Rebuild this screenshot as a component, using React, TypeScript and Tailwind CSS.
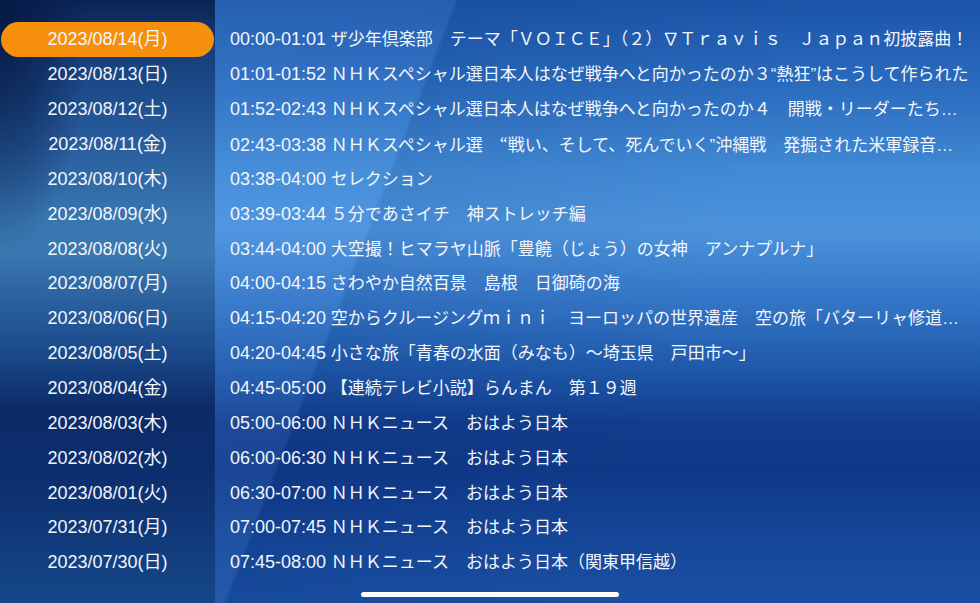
import React from 'react';

interface Program {
  date: string;
  time: string;
  title: React.ReactNode;
}

const programs: Program[] = [
  { date: '2023/08/14(月)', time: '00:00-01:01', title: 'ザ少年倶楽部　テーマ「ＶＯＩＣＥ」（２）∇Ｔｒａｖｉｓ　Ｊａｐａｎ初披露曲！' },
  { date: '2023/08/13(日)', time: '01:01-01:52', title: 'ＮＨＫスペシャル選日本人はなぜ戦争へと向かったのか３“熱狂”はこうして作られた' },
  { date: '2023/08/12(土)', time: '01:52-02:43', title: 'ＮＨＫスペシャル選日本人はなぜ戦争へと向かったのか４　開戦・リーダーたちの迷走' },
  {
    date: '2023/08/11(金)',
    time: '02:43-03:38',
    title: (
      <>
        ＮＨＫスペシャル選　<span className="font-['Noto_Sans_CJK_JP',sans-serif]">“</span>戦い、そして、死んでいく”沖縄戦　発掘された米軍録音テープ
      </>
    ),
  },
  { date: '2023/08/10(木)', time: '03:38-04:00', title: 'セレクション' },
  { date: '2023/08/09(水)', time: '03:39-03:44', title: '５分であさイチ　神ストレッチ編' },
  { date: '2023/08/08(火)', time: '03:44-04:00', title: '大空撮！ヒマラヤ山脈「豊饒（じょう）の女神　アンナプルナ」' },
  { date: '2023/08/07(月)', time: '04:00-04:15', title: 'さわやか自然百景　島根　日御碕の海' },
  { date: '2023/08/06(日)', time: '04:15-04:20', title: '空からクルージングｍｉｎｉ　ヨーロッパの世界遺産　空の旅「バターリャ修道院」' },
  { date: '2023/08/05(土)', time: '04:20-04:45', title: '小さな旅「青春の水面（みなも）～埼玉県　戸田市～」' },
  { date: '2023/08/04(金)', time: '04:45-05:00', title: '【連続テレビ小説】らんまん　第１９週' },
  { date: '2023/08/03(木)', time: '05:00-06:00', title: 'ＮＨＫニュース　おはよう日本' },
  { date: '2023/08/02(水)', time: '06:00-06:30', title: 'ＮＨＫニュース　おはよう日本' },
  { date: '2023/08/01(火)', time: '06:30-07:00', title: 'ＮＨＫニュース　おはよう日本' },
  { date: '2023/07/31(月)', time: '07:00-07:45', title: 'ＮＨＫニュース　おはよう日本' },
  { date: '2023/07/30(日)', time: '07:45-08:00', title: 'ＮＨＫニュース　おはよう日本（関東甲信越）' },
];

const selected = 0;

export default function App() {
  return (
    <div className="relative w-[980px] h-[603px] overflow-hidden flex font-['Liberation_Sans','Noto_Sans_CJK_JP',sans-serif] text-[#f3f6fb]">
      {/* date column */}
      <div className="w-[215px] h-full shrink-0 bg-[radial-gradient(ellipse_at_0%_0%,#061a45_0%,rgba(6,26,69,0)_30%),linear-gradient(to_bottom,#0b2456_0%,#163f7c_9%,#26599a_22%,#3876b0_36%,#3a78b1_42%,#2a609e_50%,#1b4b8c_58%,#0c2a67_68%,#0d2f6f_80%,#154788_100%)]">
        <div className="pt-[22.5px] flex flex-col">
          {programs.map((p, i) => (
            <div key={p.date} className="h-[34.87px] flex items-center">
              <div
                className={
                  i === selected
                    ? 'ml-[1px] w-[213px] h-[35px] rounded-full bg-[#f68f0b] flex items-center justify-center text-[18px]'
                    : 'w-full flex items-center justify-center text-[18px]'
                }
              >
                {p.date}
              </div>
            </div>
          ))}
        </div>
      </div>

      {/* program list */}
      <div className="flex-1 min-w-0 h-full bg-[linear-gradient(111deg,rgba(120,180,255,0.12)_0%,rgba(120,180,255,0.1)_24%,rgba(0,20,80,0.08)_24.5%,rgba(0,20,80,0)_60%),linear-gradient(to_bottom,#1b54a8_0%,#2a6bbd_14%,#4189d4_28%,#4c93dc_38%,#3375c6_50%,#1d56a8_62%,#123d8c_70%,#0f3988_78%,#164799_90%,#1a4fa1_100%)]">
        <div className="pt-[22.5px] pl-[15px] pr-[10px] flex flex-col">
          {programs.map((p) => (
            <div key={p.time + p.date} className="h-[34.87px] flex items-center min-w-0">
              <div className="truncate text-[17px] leading-[35px]">
                <span className="text-[18px]">{p.time}</span> {p.title}
              </div>
            </div>
          ))}
        </div>
      </div>

      {/* home indicator */}
      <div className="absolute left-[361px] top-[592px] w-[258px] h-[5px] rounded-full bg-white" />
    </div>
  );
}
